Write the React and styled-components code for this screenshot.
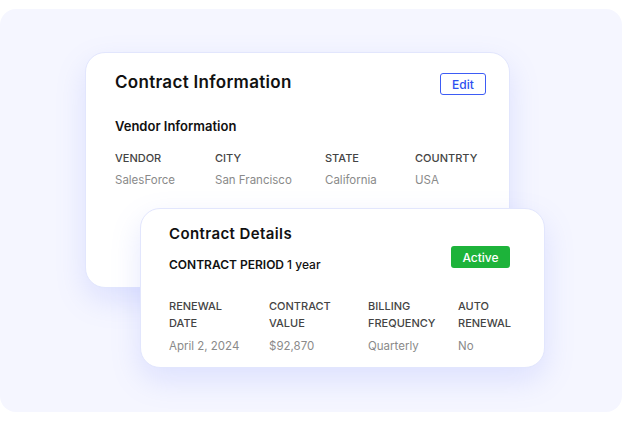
import styled, { createGlobalStyle } from "styled-components";

const GlobalStyle = createGlobalStyle`
  body {
    margin: 0;
    background: #ffffff;
    font-family: Inter, "Noto Sans", sans-serif;
  }
`;

const Panel = styled.div`
  margin-top: 9px;
  width: 622px;
  height: 403px;
  box-sizing: border-box;
  padding: 43px 0 0 85px;
  border-radius: 16px;
  background: #f5f6ff;
`;

const Card = styled.div`
  position: relative;
  box-sizing: border-box;
  width: ${(p) => p.width}px;
  height: ${(p) => p.height}px;
  margin-left: ${(p) => p.offset || 0}px;
  margin-top: ${(p) => p.overlap || 0}px;
  padding: ${(p) => p.pad};
  background: #ffffff;
  border: 1px solid #e2e6fd;
  border-radius: 20px;
  box-shadow: 0 12px 30px rgba(110, 130, 250, 0.18);
`;

const Header = styled.div`
  display: flex;
  justify-content: space-between;
  align-items: flex-start;
`;

const Title = styled.h2`
  margin: 0;
  font-size: ${(p) => p.size}px;
  font-weight: 600;
  letter-spacing: ${(p) => p.spacing}px;
  color: #111111;
  line-height: 1.3;
`;

const EditButton = styled.button`
  margin-top: 2px;
  width: 46px;
  height: 22px;
  padding: 0;
  background: #ffffff;
  border: 1px solid #3d5cf5;
  border-radius: 3px;
  color: #2e4ff0;
  font-family: inherit;
  font-size: 12px;
  font-weight: 500;
`;

const Subtitle = styled.h3`
  margin: 23px 0 0;
  font-size: 13px;
  font-weight: 600;
  color: #111111;
`;

const Fields = styled.div`
  display: grid;
  grid-template-columns: ${(p) => p.cols};
  margin-top: ${(p) => p.top}px;
`;

const Label = styled.div`
  font-size: 11px;
  font-weight: 500;
  color: #444444;
  line-height: 17px;
  text-transform: uppercase;
`;

const Value = styled.div`
  margin-top: ${(p) => p.gap}px;
  font-size: 11.5px;
  color: #8a8a8a;
`;

const PeriodRow = styled.div`
  display: flex;
  justify-content: space-between;
  align-items: center;
  margin-top: 13px;
`;

const Period = styled.div`
  font-size: 12px;
  font-weight: 600;
  color: #111111;
  span {
    font-weight: 500;
  }
`;

const Badge = styled.div`
  margin-top: -14px;
  width: 59px;
  height: 22px;
  display: flex;
  align-items: center;
  justify-content: center;
  background: #1db33a;
  border-radius: 3px;
  color: #ffffff;
  font-size: 12px;
  font-weight: 500;
`;

const vendor = [
  ["Vendor", "SalesForce"],
  ["City", "San Francisco"],
  ["State", "California"],
  ["Countrty", "USA"],
];

const details = [
  ["Renewal", "Date", "April 2, 2024"],
  ["Contract", "Value", "$92,870"],
  ["Billing", "Frequency", "Quarterly"],
  ["Auto", "Renewal", "No"],
];

export default function App() {
  return (
    <>
      <GlobalStyle />
      <Panel>
        <Card width={425} height={236} pad="18px 23px 0 29px">
          <Header>
            <Title size={17} spacing={0.3}>
              Contract Information
            </Title>
            <EditButton>Edit</EditButton>
          </Header>
          <Subtitle>Vendor Information</Subtitle>
          <Fields cols="100px 110px 90px 1fr" top={16}>
            {vendor.map(([label, value]) => (
              <div key={label}>
                <Label>{label}</Label>
                <Value gap={6}>{value}</Value>
              </div>
            ))}
          </Fields>
        </Card>
        <Card width={405} height={160} offset={55} overlap={-80} pad="15px 34px 0 28px">
          <Title size={15} spacing={0.4}>
            Contract Details
          </Title>
          <PeriodRow>
            <Period>
              CONTRACT PERIOD <span>1 year</span>
            </Period>
            <Badge>Active</Badge>
          </PeriodRow>
          <Fields cols="100px 99px 90px 1fr" top={26}>
            {details.map(([a, b, value]) => (
              <div key={a}>
                <Label>
                  {a}
                  <br />
                  {b}
                </Label>
                <Value gap={7}>{value}</Value>
              </div>
            ))}
          </Fields>
        </Card>
      </Panel>
    </>
  );
}
